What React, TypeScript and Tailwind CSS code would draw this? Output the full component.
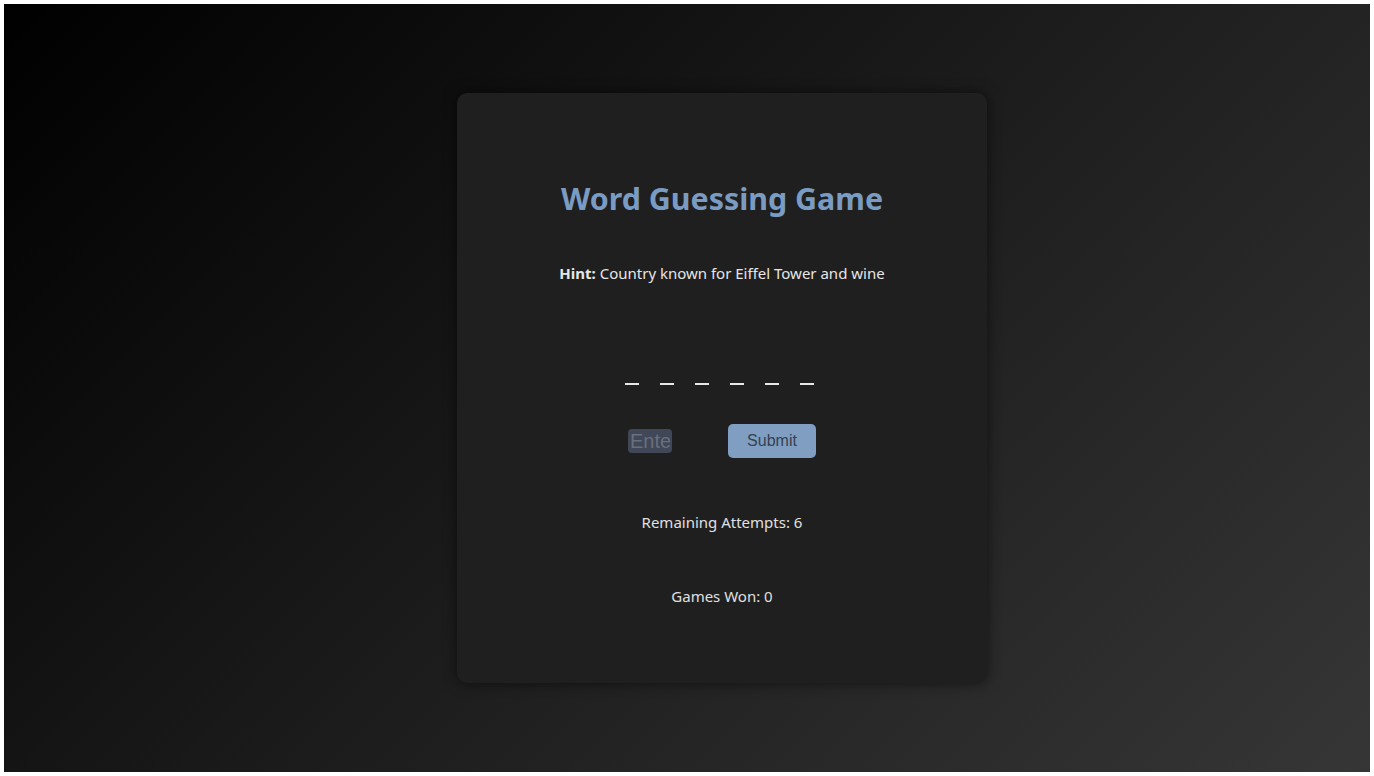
export default function App() {
  const dashes = [0, 1, 2, 3, 4, 5];
  return (
    <div className="w-[1374px] h-[776px] bg-white p-1">
      <div className="w-full h-full bg-[linear-gradient(135deg,#000000_0%,#1c1c1c_50%,#363636_100%)] flex items-center justify-center pl-[70px] font-['Noto_Sans',sans-serif]">
        <div className="w-[530px] h-[590px] rounded-[10px] bg-[#1f1f1f] shadow-[0_0_14px_rgba(0,0,0,0.55)] flex flex-col items-center pt-[84px]">
          <h1 className="text-[30.4px] leading-[44px] font-bold text-[#7a9bc2]">Word Guessing Game</h1>
          <p className="mt-[42px] text-[15px] leading-[20px] text-[#e6e6e6]">
            <span className="font-bold">Hint:</span> Country known for Eiffel Tower and wine
          </p>
          <div className="mt-[100px] flex gap-[21px] pr-[6px]">
            {dashes.map((d) => (
              <div key={d} className="w-[14px] h-[2px] bg-[#e6e6e6]" />
            ))}
          </div>
          <div className="mt-[39px] flex items-center gap-[56px]">
            <input
              placeholder="Enter"
              className="w-[44px] h-[24px] rounded-[4px] bg-[#3f4758] px-[2px] text-[20px] font-['Liberation_Sans',sans-serif] text-[#e6e6e6] placeholder:text-[#6b6f78] outline-none"
            />
            <button className="w-[88px] h-[34px] rounded-[5px] bg-[#7f9ec2] text-[16px] font-['Liberation_Sans',sans-serif] text-[#37414f]">
              Submit
            </button>
          </div>
          <p className="mt-[54px] text-[15px] leading-[20px] text-[#e0e0e0]">Remaining Attempts: 6</p>
          <p className="mt-[54px] text-[15px] leading-[20px] text-[#e0e0e0]">Games Won: 0</p>
        </div>
      </div>
    </div>
  );
}
